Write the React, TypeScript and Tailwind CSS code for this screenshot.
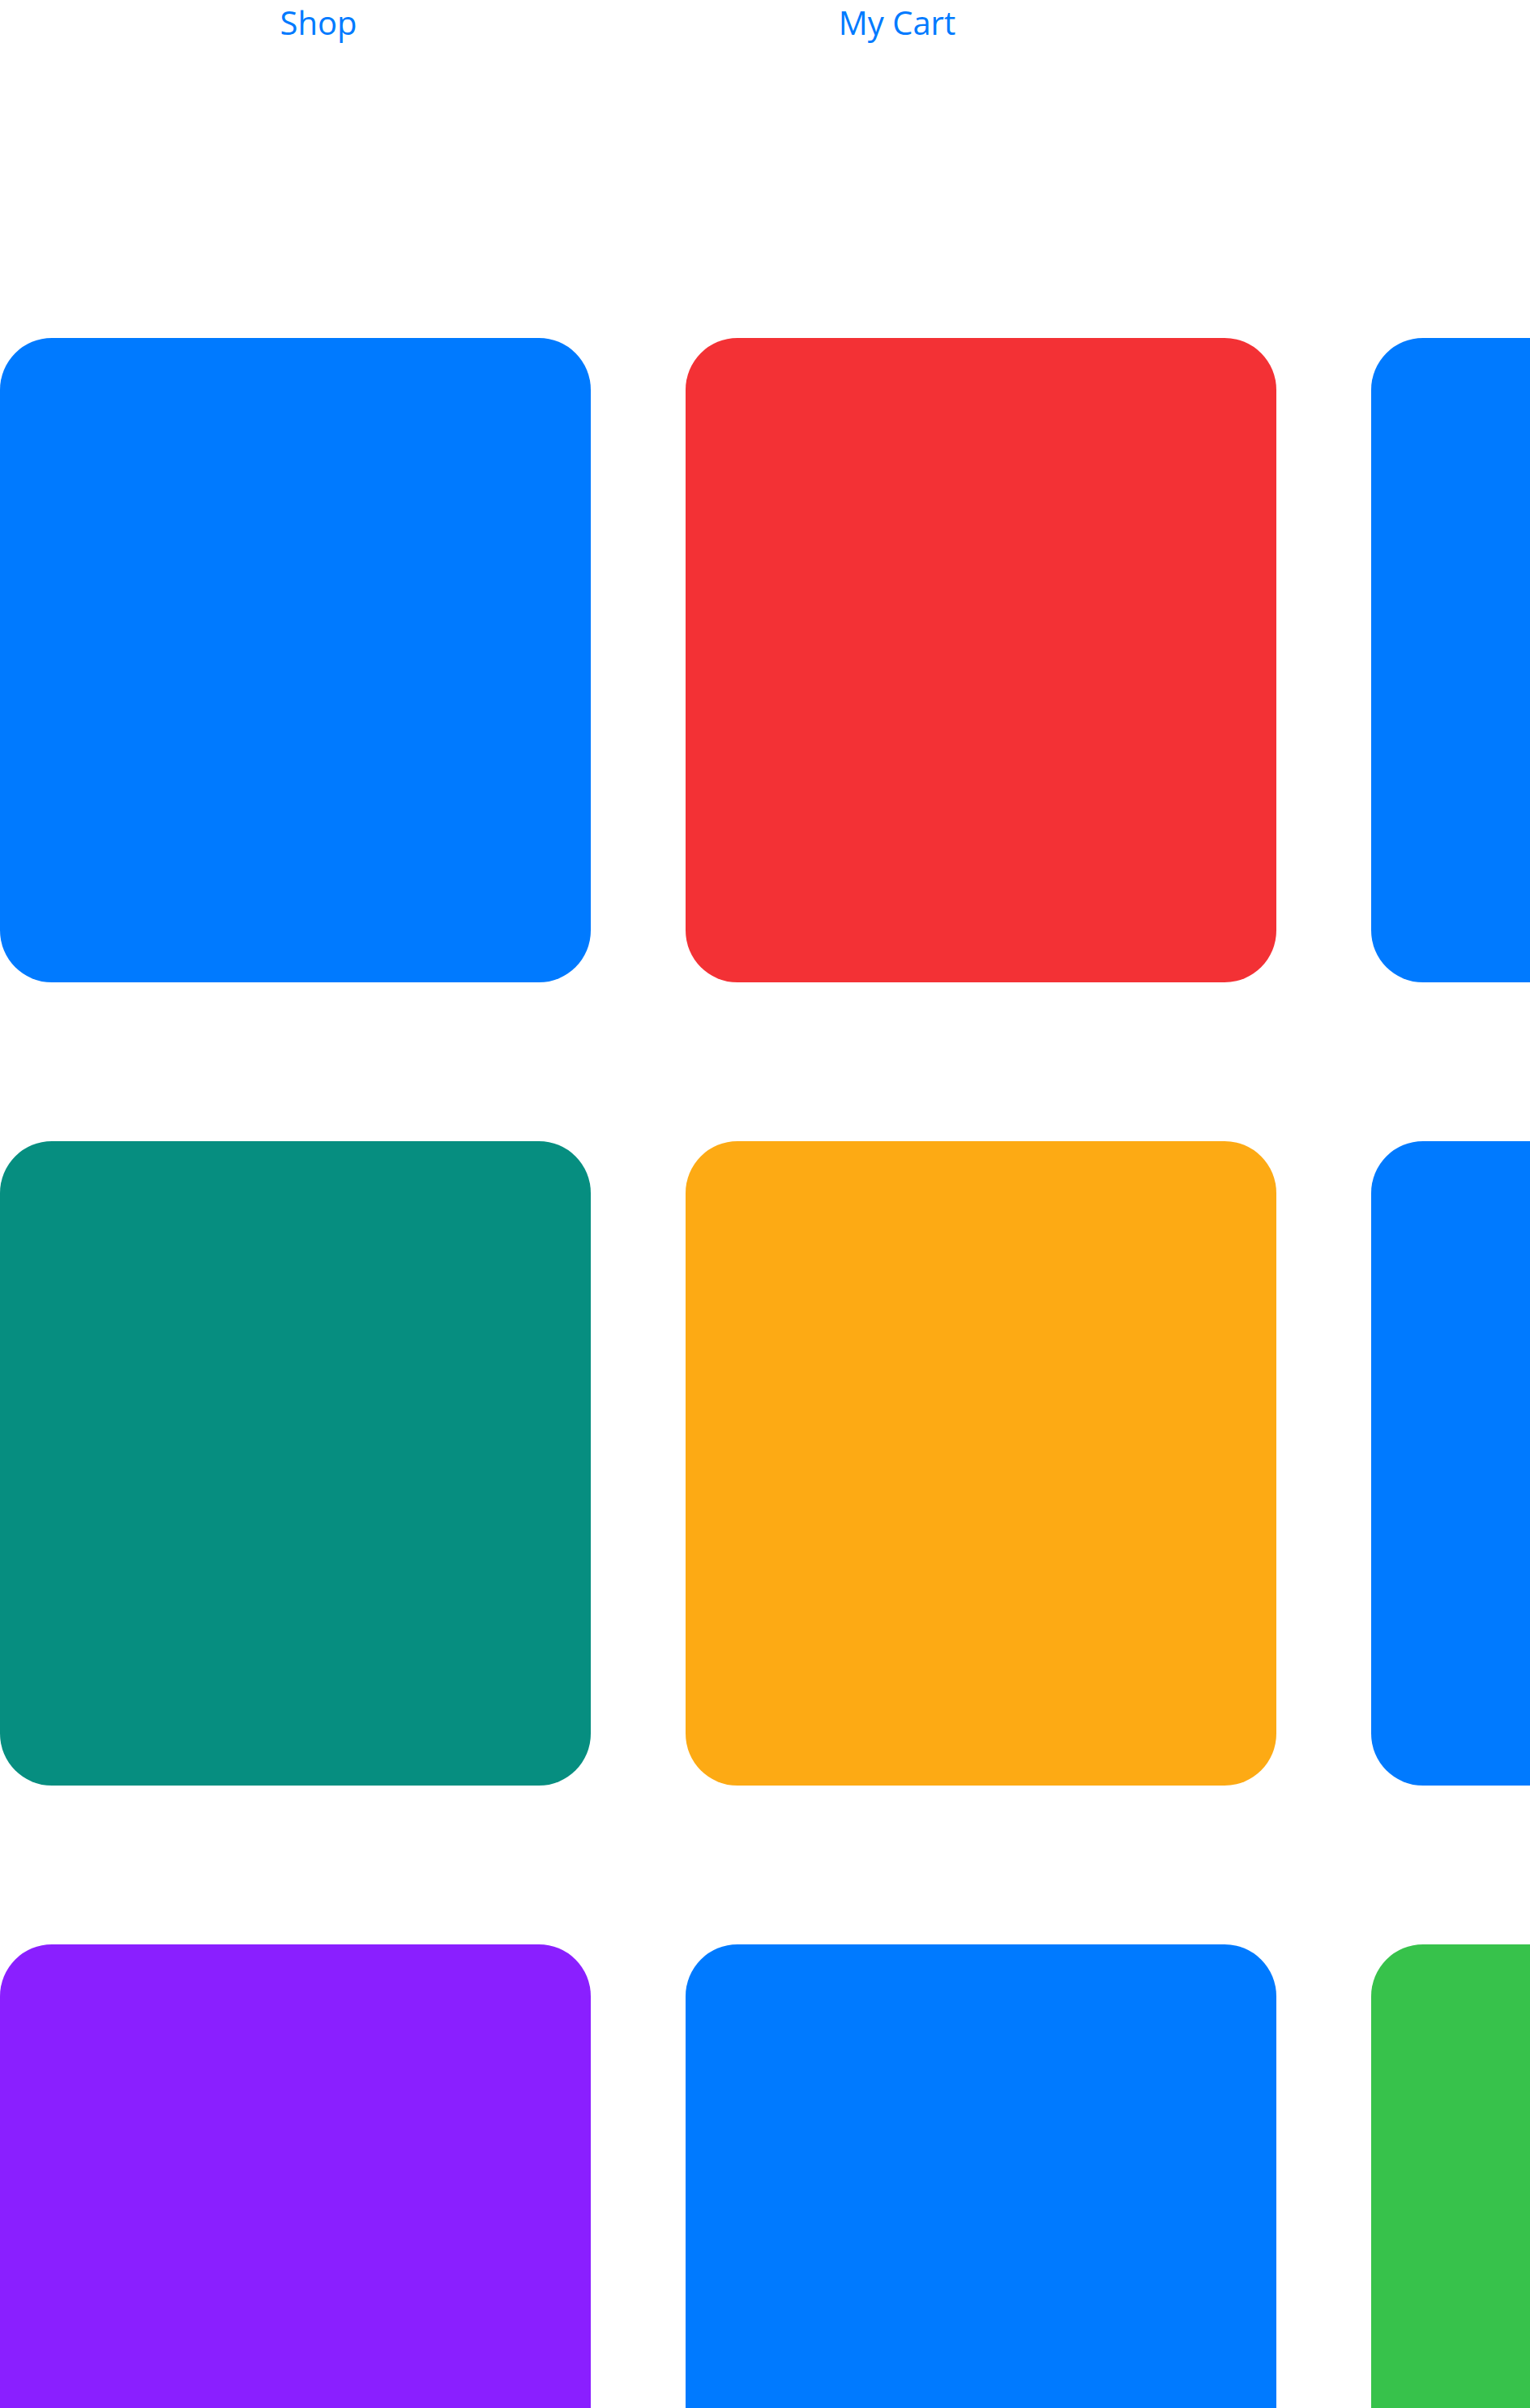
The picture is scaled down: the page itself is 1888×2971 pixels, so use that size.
import React from "react";

const cards = [
  "bg-[#007aff]",
  "bg-[#f33135]",
  "bg-[#007aff]",
  "bg-[#068e80]",
  "bg-[#fdaa14]",
  "bg-[#007aff]",
  "bg-[#8a1fff]",
  "bg-[#007aff]",
  "bg-[#37c24b]",
];

export default function App() {
  return (
    <div className="w-[1888px] h-[2971px] overflow-hidden bg-white" style={{ fontFamily: '"Open Sans", "Noto Sans", sans-serif' }}>
      <div className="flex text-[40px] leading-[56px] text-[#007aff]">
        <div className="ml-[243px] w-[300px] text-center">Shop</div>
        <div className="ml-[414px] w-[300px] text-center">My Cart</div>
      </div>
      <div className="mt-[361px] grid grid-cols-[729px_729px_729px] gap-x-[117px] gap-y-[196px]">
        {cards.map((c, i) => (
          <div key={i} className={`h-[795px] rounded-[64px] ${c}`} />
        ))}
      </div>
    </div>
  );
}
